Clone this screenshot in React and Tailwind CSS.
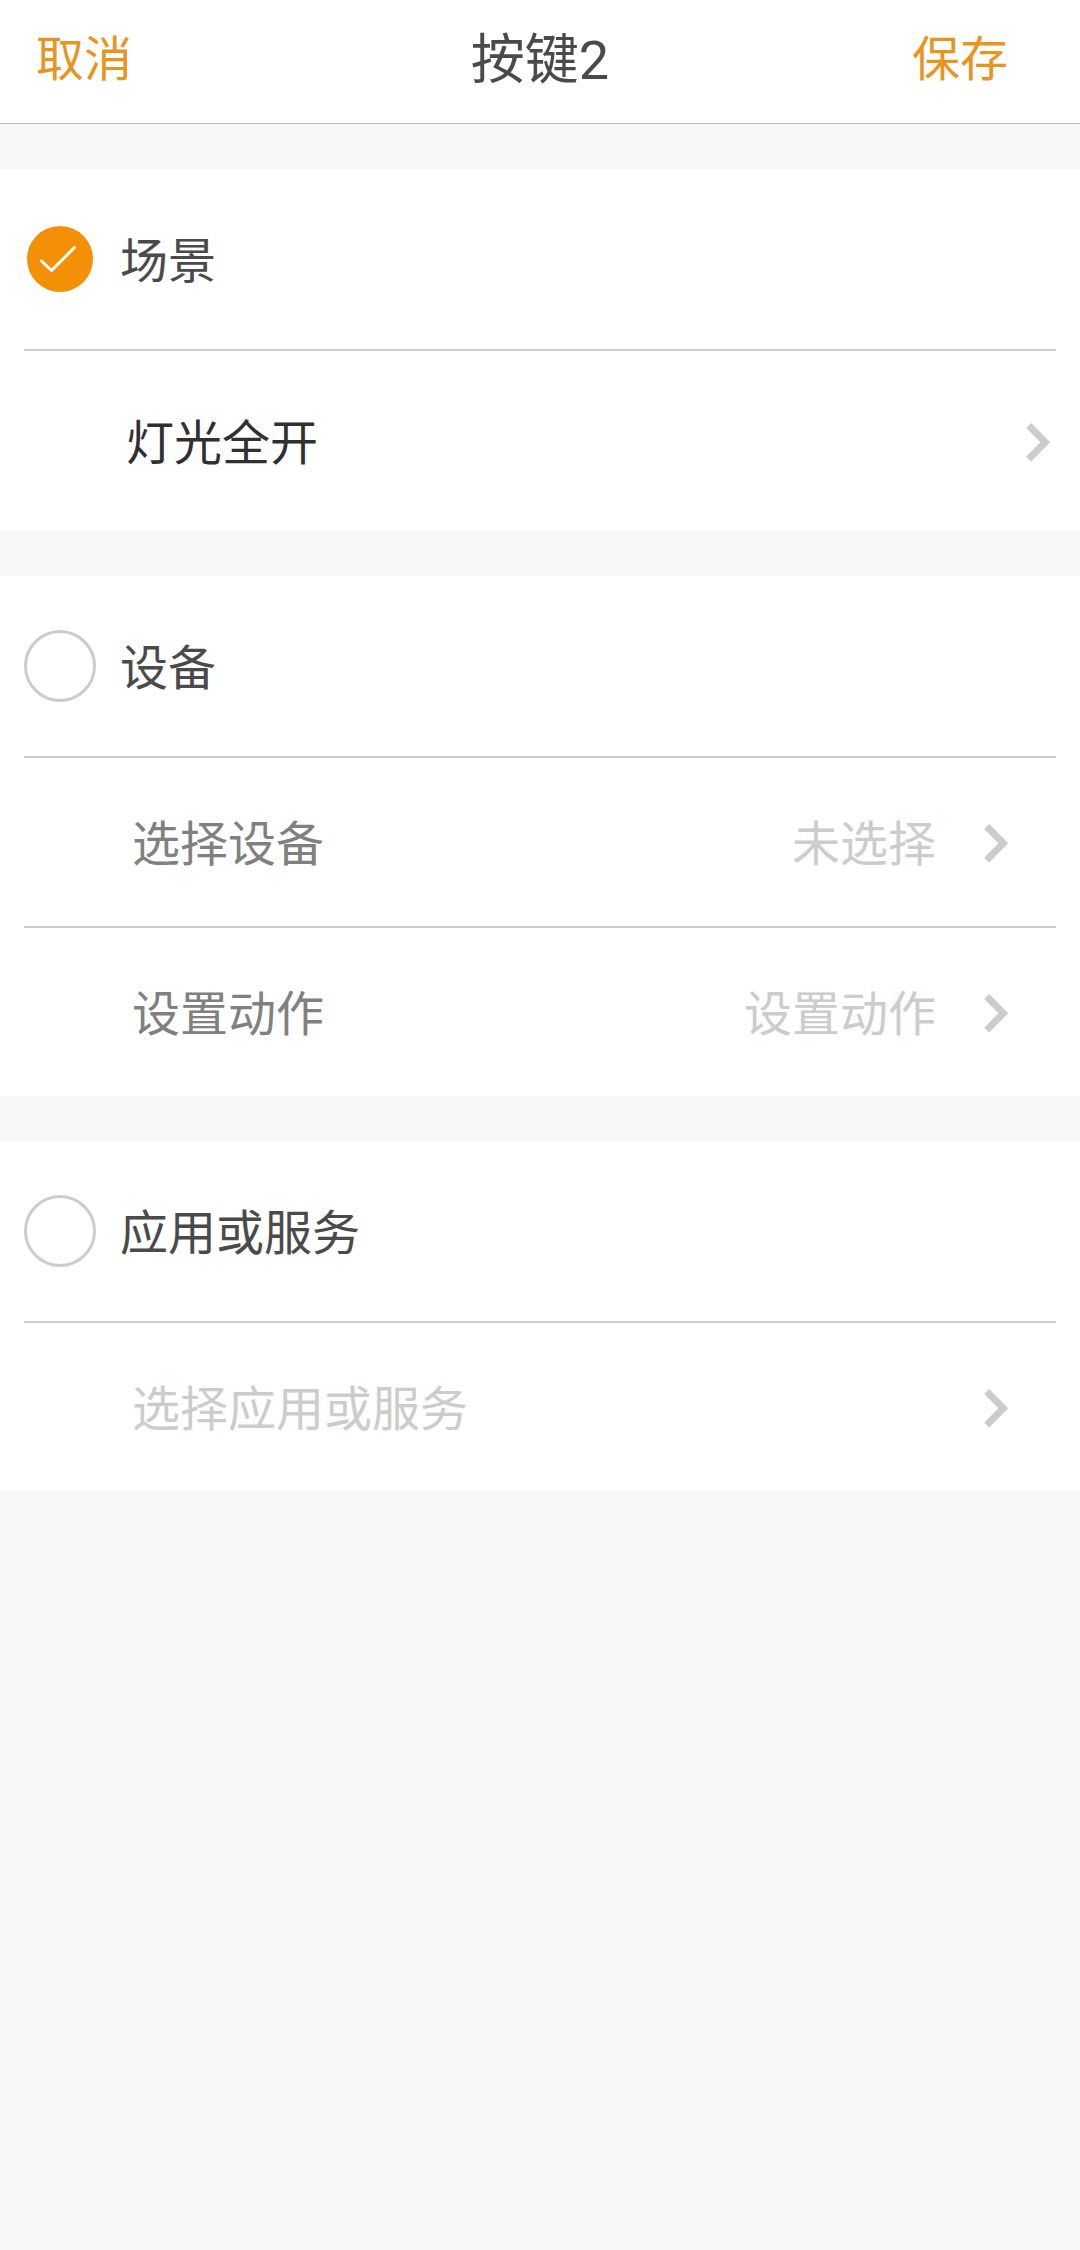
import React, { useState } from 'react'

const sections = [
  {
    id: 'scene',
    title: '场景',
    rows: [
      { label: '灯光全开', rowClass: 'h-[180px] pl-[126px] pr-[24px]', labelClass: 'text-[#303030]' },
    ],
  },
  {
    id: 'device',
    title: '设备',
    rows: [
      { label: '选择设备', value: '未选择', rowClass: 'h-[168px] pl-[132px] pr-[66px]', labelClass: 'text-[#808080]' },
      { label: '设置动作', value: '设置动作', rowClass: 'h-[168px] pl-[132px] pr-[66px]', labelClass: 'text-[#808080]' },
    ],
  },
  {
    id: 'service',
    title: '应用或服务',
    rows: [
      { label: '选择应用或服务', rowClass: 'h-[168px] pl-[132px] pr-[66px]', labelClass: 'text-[#cccccc]' },
    ],
  },
];

const Radio = ({ checked }) => (
  <svg className="h-[72px] w-[72px] shrink-0" viewBox="0 0 72 72" fill="none">
    {checked ? (
      <>
        <circle cx="36" cy="36" r="33" fill="#f39005" />
        <path d="M17.5 38L27.5 47.5L50.5 24.5" stroke="#fff" strokeWidth="3" strokeLinecap="round" strokeLinejoin="round" />
      </>
    ) : (
      <circle cx="36" cy="36" r="34.5" stroke="#cccccc" strokeWidth="3" />
    )}
  </svg>
);

const Chevron = () => (
  <svg className="h-12 w-12 shrink-0" viewBox="0 0 48 48" fill="none">
    <path d="M20.7 8.5L37.3 25.3L20.7 42.1" stroke="#cccccc" strokeWidth="7" />
  </svg>
);

const Divider = () => <div className="mx-[24px] h-[2px] bg-[#cbcbcb]" />;

const App = () => {
  const [selected, setSelected] = useState('scene');

  return (
    <div className="min-h-[2250px] w-[1080px] bg-[#f8f8f8] font-[Roboto,'Noto_Sans_CJK_SC',sans-serif] text-[48px] leading-none">
      <header className="grid h-[124px] grid-cols-3 items-center border-b border-[#c0c0c0] bg-white pb-[3px]">
        <button className="pl-[36px] text-left text-[#e7951f]">取消</button>
        <h1 className="pt-px text-center text-[54px] text-[#4a4a4a]">按键2</h1>
        <button className="pr-[72px] text-right text-[#e7951f]">保存</button>
      </header>

      <main className="flex flex-col gap-[45px] pt-[45px]">
        {sections.map(section => (
          <section key={section.id} className="bg-white">
            <div
              onClick={() => setSelected(section.id)}
              className="flex h-[180px] items-center gap-[24px] pl-[24px]"
            >
              <Radio checked={selected === section.id} />
              <h2 className="pt-[6px] text-[#4a4a4a]">{section.title}</h2>
            </div>
            {section.rows.map(row => (
              <React.Fragment key={row.label}>
                <Divider />
                <div className={`flex items-center ${row.rowClass}`}>
                  <span className={`flex-1 pt-[6px] ${row.labelClass}`}>{row.label}</span>
                  {row.value && <span className="mr-[30px] pt-[6px] text-[#cccccc]">{row.value}</span>}
                  <Chevron />
                </div>
              </React.Fragment>
            ))}
          </section>
        ))}
      </main>
    </div>
  );
};

export default App;
